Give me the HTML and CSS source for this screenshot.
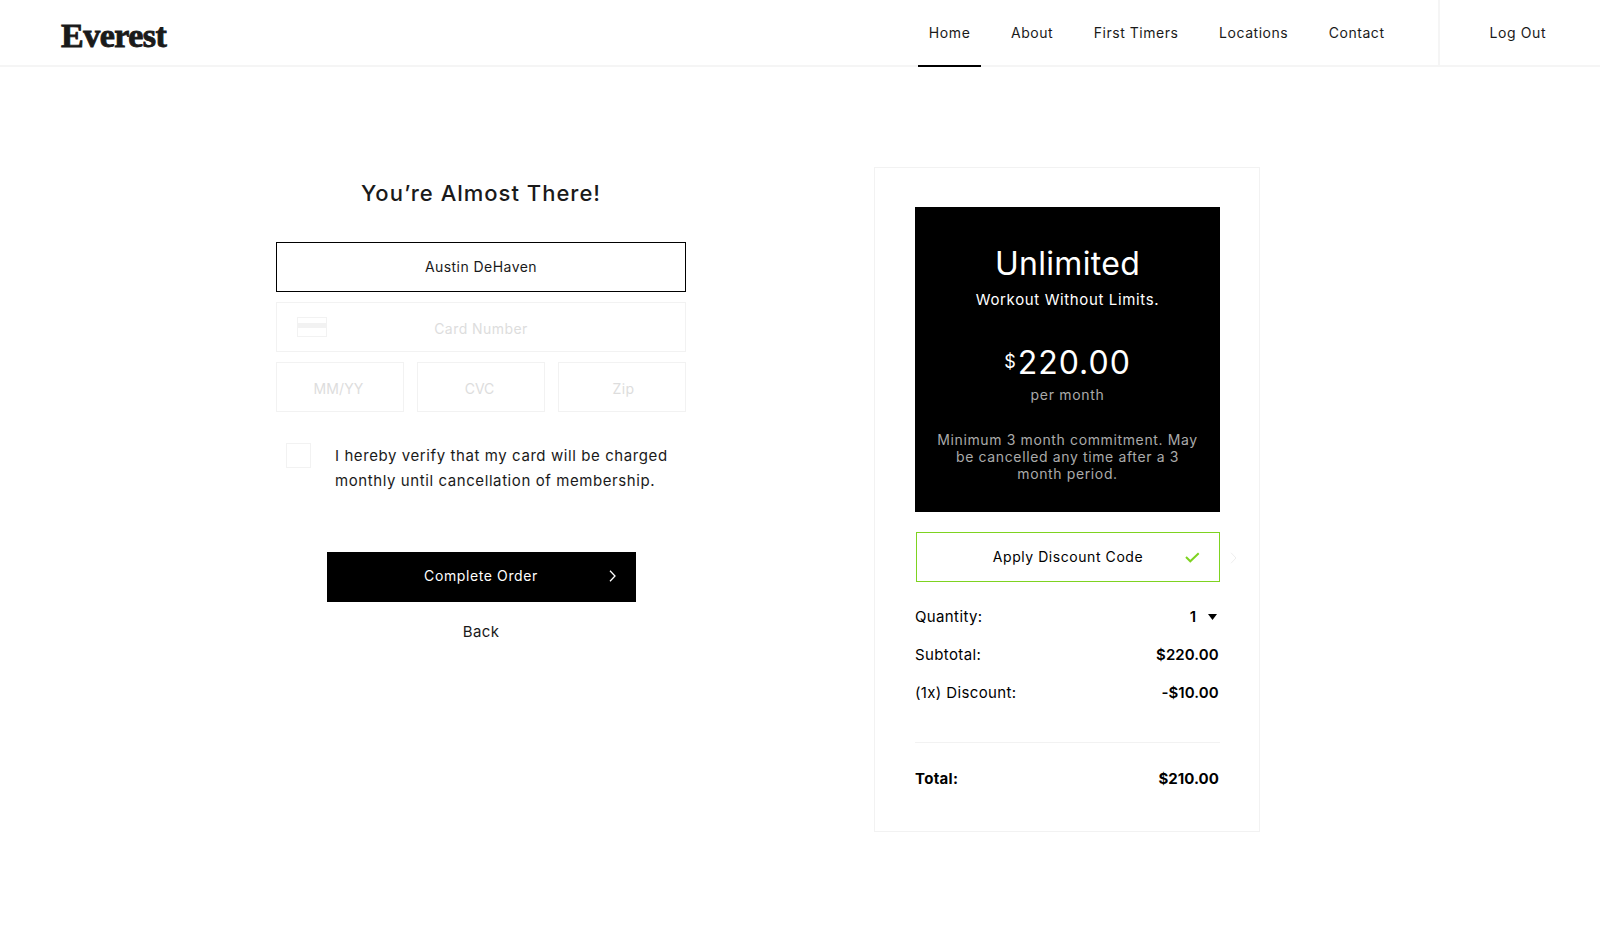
FILE: index.html
```html
<!DOCTYPE html>
<html lang="en">
<head>
<meta charset="utf-8">
<title>Everest</title>
<link rel="stylesheet" href="styles.css">
</head>
<body>
<header class="header">
  <a class="logo">Everest</a>
  <nav class="nav">
    <a class="nav-link active">Home</a>
    <a class="nav-link">About</a>
    <a class="nav-link">First Timers</a>
    <a class="nav-link">Locations</a>
    <a class="nav-link">Contact</a>
  </nav>
  <a class="logout">Log Out</a>
</header>
<main class="main">
  <section class="payment">
    <h1 class="title">You’re Almost There!</h1>
    <div class="field filled">Austin DeHaven</div>
    <div class="field"><i class="card-icon"></i>Card Number</div>
    <div class="row">
      <div class="field expiry">MM/YY</div>
      <div class="field cvc">CVC</div>
      <div class="field zip">Zip</div>
    </div>
    <div class="verify">
      <i class="checkbox"></i>
      <p class="verify-text">I hereby verify that my card will be charged<br>monthly until cancellation of membership.</p>
    </div>
    <div class="button">Complete Order
      <svg class="chevron" width="8" height="12" viewBox="0 0 8 12"><path d="M1 .7 6 6 1 11.3"/></svg>
    </div>
    <a class="back">Back</a>
  </section>
  <aside class="summary">
    <div class="plan">
      <h2 class="plan-name">Unlimited</h2>
      <p class="plan-tag">Workout Without Limits.</p>
      <div class="price"><span class="currency">$</span>220.00</div>
      <p class="period">per month</p>
      <p class="terms">Minimum 3 month commitment. May<br>be cancelled any time after a 3<br>month period.</p>
    </div>
    <div class="discount">Apply Discount Code
      <svg class="check" width="15" height="11" viewBox="0 0 15 11"><path d="M1 5 5.3 9.3 13.7 1.3"/></svg>
      <svg class="next" width="8" height="12" viewBox="0 0 8 12"><path d="M1 .7 6 6 1 11.3"/></svg>
    </div>
    <div class="line"><span>Quantity:</span><span class="qty"><b>1</b><svg width="9" height="6" viewBox="0 0 9 6"><path d="M0 0h9L4.5 6z"/></svg></span></div>
    <div class="line"><span>Subtotal:</span><b>$220.00</b></div>
    <div class="line"><span>(1x) Discount:</span><b>-$10.00</b></div>
    <div class="line total"><b class="total-label">Total:</b><b>$210.00</b></div>
  </aside>
</main>
</body>
</html>
```
FILE: styles.css
```css
*{box-sizing:border-box}
body{margin:0;background:#fff;color:#1a1a1a;font:14px Inter,"Liberation Sans",sans-serif;min-height:950px}
h1,h2,p{margin:0;font-weight:400}

.header{height:67px;display:flex;border-bottom:2px solid #f5f5f5;padding-left:61px}
.logo{font:bold 34px/71px "Liberation Serif",serif;height:65px;-webkit-text-stroke:.9px #1a1a1a;letter-spacing:-.5px;margin-right:auto}
.nav{display:flex;gap:18.6px;margin-right:42.5px}
.nav-link{height:67px;line-height:65px;padding:0 11px;white-space:nowrap;letter-spacing:.53px}
.active{border-bottom:2px solid #000;letter-spacing:.65px}
.logout{width:162px;border-left:2px solid #f5f5f5;line-height:65px;text-align:center;padding-right:4.5px;letter-spacing:.61px}

.main{display:flex;align-items:flex-start;padding:100px 0 0 276px;gap:188px}
.payment{width:410px;padding-top:6px;display:flex;flex-direction:column;gap:10px}
.title{font-size:22px;line-height:40px;font-weight:500;letter-spacing:1px;text-align:center;margin-bottom:19px}
.field{height:50px;line-height:47px;padding-top:2px;border:1px solid #f2f2f2;text-align:center;color:#ddd;letter-spacing:.45px;position:relative}
.filled{border-color:#000;color:#1a1a1a;padding-top:0;line-height:47px}
.card-icon{position:absolute;left:20px;top:14px;width:30px;height:20px;border:1px solid #f2f2f2;background:linear-gradient(#f2f2f2,#f2f2f2) 0 5px/100% 5px no-repeat}
.row{display:grid;grid-template-columns:repeat(3,1fr);gap:13px}
.expiry{padding-right:3px;letter-spacing:.1px}
.cvc{padding-right:3px;letter-spacing:-.05px}
.zip{padding-left:3px}
.verify{display:flex;gap:24px;padding:21px 0 0 10px}
.checkbox{width:25px;height:25px;border:1px solid #f2f2f2}
.verify-text{font-size:15px;line-height:25px;white-space:nowrap;letter-spacing:.585px}
.button{width:309px;height:50px;line-height:48px;background:#000;color:#fff;text-align:center;align-self:center;margin:49px 0 0;letter-spacing:.61px;position:relative}
.chevron{position:absolute;left:282px;top:18px}
svg path{fill:none;stroke:#fff;stroke-width:1.3}
.back{text-align:center;font-size:15px;line-height:40px;letter-spacing:.4px}

.summary{width:386px;height:665px;border:1px solid #f2f2f2;padding:39px 39px 0 40px;color:#000}
.plan{height:305px;background:#000;color:#fff;text-align:center;padding-top:36px}
.plan-name{font-size:32px;line-height:42px;letter-spacing:.31px}
.plan-tag{font-size:15px;line-height:30px;letter-spacing:.63px}
.price{font-size:32px;line-height:40px;margin-top:27px;letter-spacing:1px}
.currency{font-size:18px;vertical-align:6px;margin-right:1px}
.period{line-height:24px;color:#aaa;letter-spacing:.69px}
.terms{line-height:17px;color:#aaa;margin-top:24px;white-space:nowrap;letter-spacing:.63px}
.discount{height:50px;line-height:47px;border:1px solid #7ed321;margin:20px 0 16px 1px;text-align:center;letter-spacing:.56px;position:relative}
.check{position:absolute;left:268px;top:19px}
.check path{stroke:#7ed321;stroke-width:2}
.next{position:absolute;left:313px;top:19px}
.next path{stroke:#eee;stroke-width:1}
.line{display:flex;justify-content:space-between;font-size:15px;line-height:38px;letter-spacing:.37px}
.line b{font-weight:600;letter-spacing:.1px;padding-right:1.2px}
.qty{display:flex;align-items:center;gap:10px;padding-right:3.5px}
.qty path{fill:#000;stroke:none}
.total{border-top:1px solid #f2f2f2;margin-top:30px;padding-top:17px}
.total b{font-weight:700;letter-spacing:.02px}
.total .total-label{letter-spacing:.32px}
```
